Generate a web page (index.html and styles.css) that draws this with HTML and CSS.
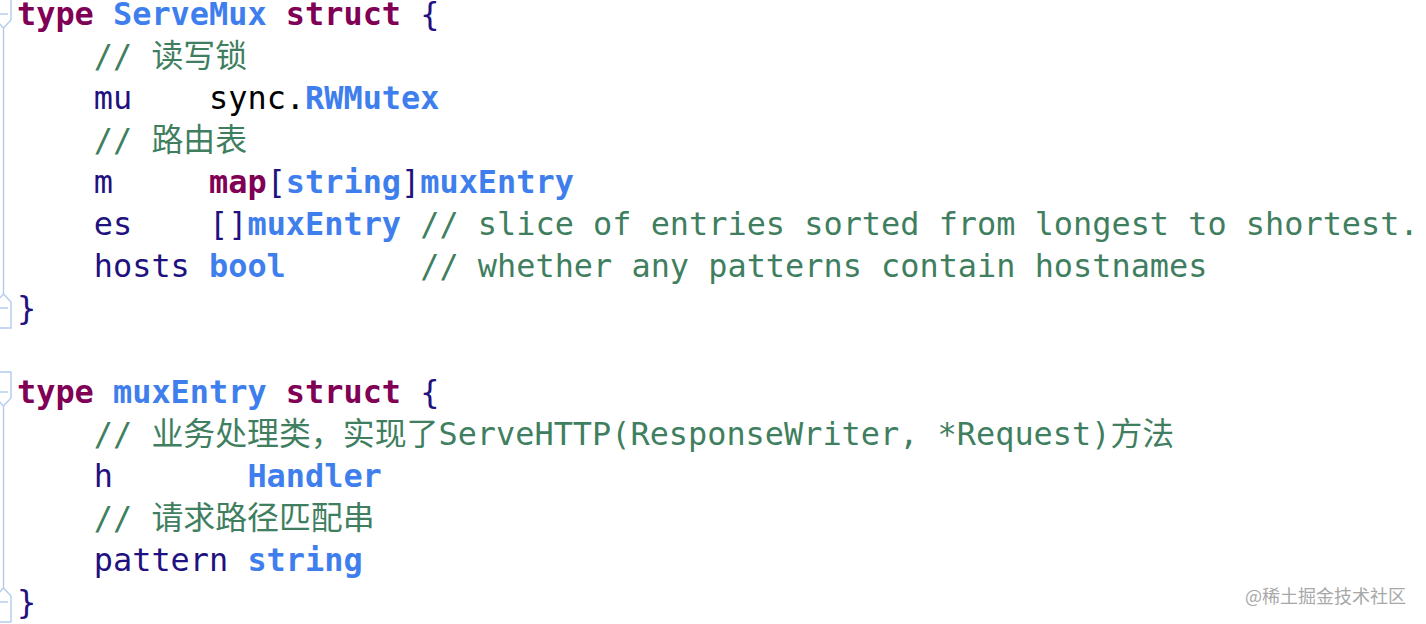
FILE: index.html
```html
<!DOCTYPE html>
<html>
<head>
<meta charset="utf-8">
<link rel="stylesheet" href="styles.css">
</head>
<body>
<div class="editor">
  <div class="line first"><svg class="gut" viewBox="0 7 17 35"><polygon points="-4,1 11,1 11,27 3.5,35 -4,27"/><line x1="-1" y1="21" x2="8" y2="21"/><line x1="3.5" y1="35" x2="3.5" y2="42"/></svg><code><span class="kw">type</span> <span class="ty">ServeMux</span> <span class="kw">struct</span> <span class="pn">{</span></code></div>
  <div class="line"><svg class="gut" viewBox="0 0 17 42"><line x1="3.5" y1="0" x2="3.5" y2="42"/></svg><code>    <span class="cm">// 读写锁</span></code></div>
  <div class="line"><svg class="gut" viewBox="0 0 17 42"><line x1="3.5" y1="0" x2="3.5" y2="42"/></svg><code>    <span class="fd">mu</span>    <span class="pl">sync.</span><span class="ty">RWMutex</span></code></div>
  <div class="line"><svg class="gut" viewBox="0 0 17 42"><line x1="3.5" y1="0" x2="3.5" y2="42"/></svg><code>    <span class="cm">// 路由表</span></code></div>
  <div class="line"><svg class="gut" viewBox="0 0 17 42"><line x1="3.5" y1="0" x2="3.5" y2="42"/></svg><code>    <span class="fd">m</span>     <span class="kw">map</span><span class="pn">[</span><span class="ty">string</span><span class="pn">]</span><span class="ty">muxEntry</span></code></div>
  <div class="line"><svg class="gut" viewBox="0 0 17 42"><line x1="3.5" y1="0" x2="3.5" y2="42"/></svg><code>    <span class="fd">es</span>    <span class="pn">[]</span><span class="ty">muxEntry</span> <span class="cm">// slice of entries sorted from longest to shortest.</span></code></div>
  <div class="line"><svg class="gut" viewBox="0 0 17 42"><line x1="3.5" y1="0" x2="3.5" y2="42"/></svg><code>    <span class="fd">hosts</span> <span class="ty">bool</span>       <span class="cm">// whether any patterns contain hostnames</span></code></div>
  <div class="line"><svg class="gut" viewBox="0 0 17 42"><line x1="3.5" y1="0" x2="3.5" y2="7"/><polygon points="3.5,7 11,15 11,41 -4,41 -4,15"/><line x1="-1" y1="21" x2="8" y2="21"/></svg><code><span class="pn">}</span></code></div>
  <div class="line"><svg class="gut" viewBox="0 0 17 42"></svg><code> </code></div>
  <div class="line"><svg class="gut" viewBox="0 0 17 42"><polygon points="-4,1 11,1 11,27 3.5,35 -4,27"/><line x1="-1" y1="21" x2="8" y2="21"/><line x1="3.5" y1="35" x2="3.5" y2="42"/></svg><code><span class="kw">type</span> <span class="ty">muxEntry</span> <span class="kw">struct</span> <span class="pn">{</span></code></div>
  <div class="line"><svg class="gut" viewBox="0 0 17 42"><line x1="3.5" y1="0" x2="3.5" y2="42"/></svg><code>    <span class="cm">// 业务处理类，实现了ServeHTTP(ResponseWriter, *Request)方法</span></code></div>
  <div class="line"><svg class="gut" viewBox="0 0 17 42"><line x1="3.5" y1="0" x2="3.5" y2="42"/></svg><code>    <span class="fd">h</span>       <span class="ty">Handler</span></code></div>
  <div class="line"><svg class="gut" viewBox="0 0 17 42"><line x1="3.5" y1="0" x2="3.5" y2="42"/></svg><code>    <span class="cm">// 请求路径匹配串</span></code></div>
  <div class="line"><svg class="gut" viewBox="0 0 17 42"><line x1="3.5" y1="0" x2="3.5" y2="42"/></svg><code>    <span class="fd">pattern</span> <span class="ty">string</span></code></div>
  <div class="line"><svg class="gut" viewBox="0 0 17 42"><line x1="3.5" y1="0" x2="3.5" y2="7"/><polygon points="3.5,7 11,15 11,41 -4,41 -4,15"/><line x1="-1" y1="21" x2="8" y2="21"/></svg><code><span class="pn">}</span></code></div>
</div>
<div class="watermark">@稀土掘金技术社区</div>
</body>
</html>
```

FILE: styles.css
```css
html, body {
  margin: 0;
  padding: 0;
  background: #ffffff;
  overflow: hidden;
}
body {
  width: 1426px;
  height: 624px;
  position: relative;
}
.editor {
  display: flex;
  flex-direction: column;
}
.line {
  display: flex;
  align-items: stretch;
  height: 42px;
}
.line.first {
  height: 35px;
}
.gut {
  width: 17px;
  height: 42px;
  flex: 0 0 17px;
  overflow: visible;
}
.first .gut {
  height: 35px;
}
.gut polygon {
  fill: #ffffff;
  stroke: #b3caf0;
  stroke-width: 1.4;
}
.gut line {
  stroke: #b3caf0;
  stroke-width: 1.4;
}
code {
  font-family: "DejaVu Sans Mono", "Noto Sans CJK SC", monospace;
  font-size: 31.9px;
  line-height: 42px;
  white-space: pre;
  color: #000000;
}
.first code {
  line-height: 28px;
}
.kw {
  color: #7f0055;
  font-weight: bold;
}
.ty {
  color: #3f7eed;
  font-weight: bold;
}
.fd {
  color: #1f1180;
}
.pn {
  color: #1f1180;
}
.pl {
  color: #000000;
}
.cm {
  color: #3f7f5f;
}
.watermark {
  position: absolute;
  right: 20px;
  bottom: 16px;
  font-family: "Noto Sans CJK SC", sans-serif;
  font-size: 18px;
  line-height: 26px;
  color: #a8a8a8;
}
```
